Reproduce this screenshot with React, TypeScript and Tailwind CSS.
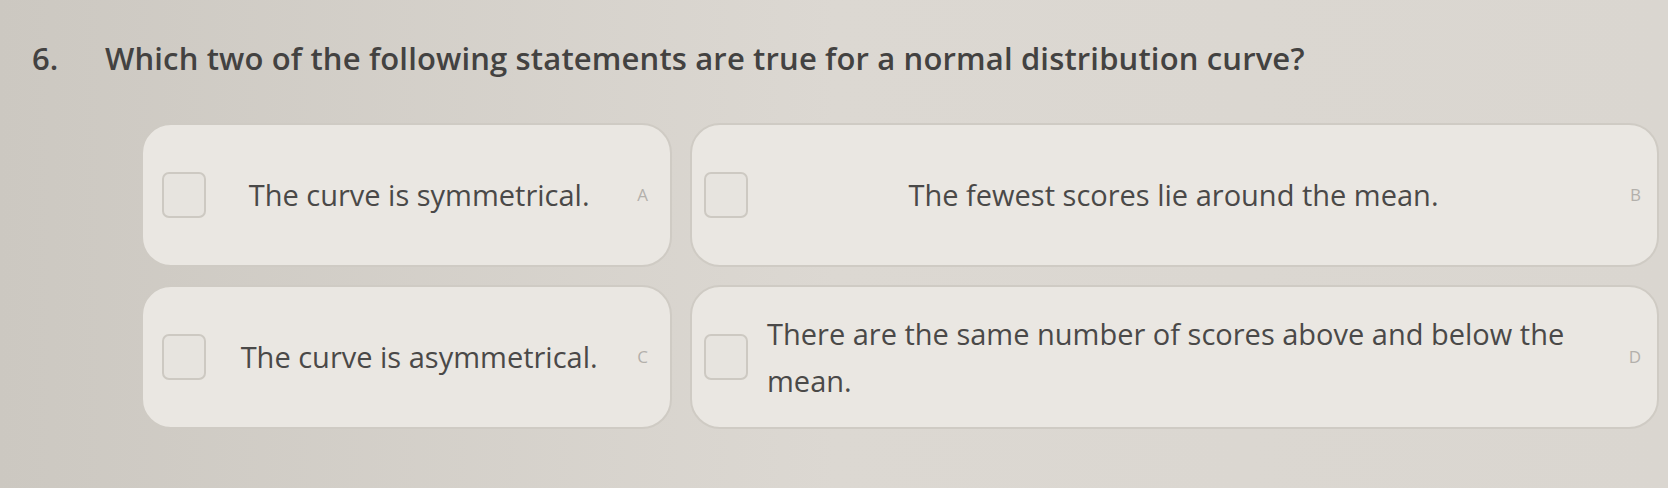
const font = { fontFamily: '"Open Sans", "Liberation Sans", sans-serif' };

type CardProps = {
  text: string;
  letter: string;
  boxClass: string;
  textClass: string;
  letterClass: string;
};

function Option({ text, letter, boxClass, textClass, letterClass }: CardProps) {
  return (
    <div className="flex h-[144px] items-center rounded-[30px] border-2 border-[#cfcbc4] bg-[#eae7e2]">
      <div className={boxClass}>
        <div className="h-[46px] w-[44px] rounded-[7px] border-2 border-[#cdc9c2] bg-[#e7e4df]" />
      </div>
      <div className={textClass}>
        <p className="text-[29px] leading-[47px] text-[#4a4948]">{text}</p>
      </div>
      <div className={letterClass}>{letter}</div>
    </div>
  );
}

export default function App() {
  return (
    <div
      className="h-[488px] w-[1668px] overflow-hidden bg-gradient-to-r from-[#ccc8c1] via-[#dcd8d2] to-[#dad6d0]"
      style={font}
    >
      <div className="flex items-baseline pt-[35px] text-[#434241]">
        <div className="w-[105px] pl-[32px] text-[31px] font-semibold">6.</div>
        <h1 className="text-[31px] font-semibold tracking-[0.15px]">
          Which two of the following statements are true for a normal distribution curve?
        </h1>
      </div>

      <div className="ml-[141px] mt-[41px] grid w-[1518px] grid-cols-[531px_969px] gap-x-[18px] gap-y-[18px]">
        <Option
          text="The curve is symmetrical."
          letter="A"
          boxClass="pl-[19px]"
          textClass="ml-[19px] flex flex-1 justify-center"
          letterClass="ml-[24px] mr-[22px] text-[17px] text-[#b3b0ab]"
        />
        <Option
          text="The fewest scores lie around the mean."
          letter="B"
          boxClass="pl-[12px]"
          textClass="ml-[19px] flex flex-1 justify-center"
          letterClass="ml-[50px] mr-[16px] text-[17px] text-[#b3b0ab]"
        />
        <Option
          text="The curve is asymmetrical."
          letter="C"
          boxClass="pl-[19px]"
          textClass="ml-[19px] flex flex-1 justify-center"
          letterClass="ml-[24px] mr-[22px] text-[17px] text-[#b3b0ab]"
        />
        <Option
          text="There are the same number of scores above and below the mean."
          letter="D"
          boxClass="pl-[12px]"
          textClass="ml-[19px] flex flex-1 justify-center"
          letterClass="ml-[50px] mr-[16px] text-[17px] text-[#b3b0ab]"
        />
      </div>
    </div>
  );
}
